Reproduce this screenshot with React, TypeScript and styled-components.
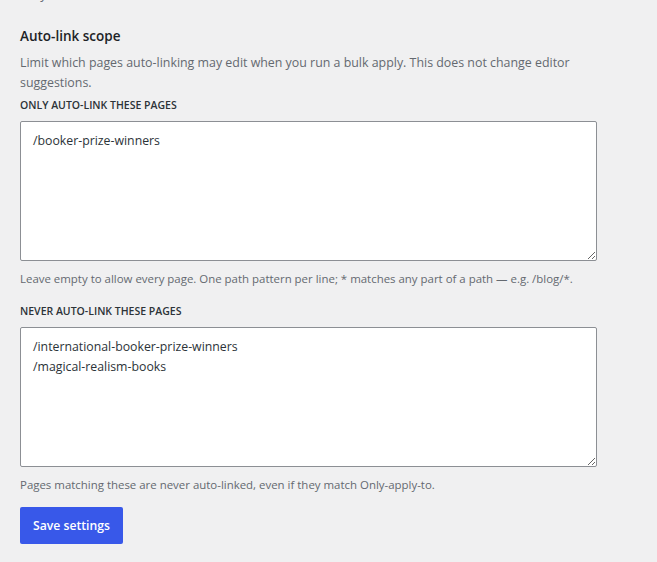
import React from "react";
import styled, { createGlobalStyle } from "styled-components";

const Global = createGlobalStyle`
  html, body { margin: 0; padding: 0; background: #f0f0f1; }
  body { font-family: "Open Sans", "Noto Sans", sans-serif; color: #3c434a; }
  * { box-sizing: border-box; }
`;

const Page = styled.div`
  width: 657px;
  height: 562px;
  overflow: hidden;
  padding: 0 20px;
  display: flex;
  flex-direction: column;
`;

const CutLine = styled.p`
  margin: -15px 0 0;
  font-size: 12.4px;
  line-height: 20px;
  color: #646970;
`;

const Heading = styled.h2`
  margin: 21px 0 0;
  font-size: 13.5px;
  line-height: 20px;
  font-weight: 600;
  color: #1d2327;
`;

const Description = styled.p`
  margin: 7px 0 0;
  max-width: 577px;
  font-size: 12.4px;
  line-height: 20px;
  color: #646970;
`;

const Label = styled.label<{ $gap: number }>`
  display: block;
  margin-top: ${(p) => p.$gap}px;
  font-size: 10.5px;
  line-height: 16px;
  font-weight: 600;
  text-transform: uppercase;
  color: #2c3338;
`;

const Area = styled.textarea`
  display: block;
  margin-top: 8px;
  width: 577px;
  height: 140px;
  padding: 9px 12px;
  border: 1px solid #8c8f94;
  border-radius: 2px;
  background: #fff;
  font-family: inherit;
  font-size: 12.3px;
  line-height: 20px;
  color: #2c3338;
  resize: vertical;
  outline: none;
`;

const Help = styled.p`
  margin: 10px 0 0;
  font-size: 11.45px;
  line-height: 16px;
  color: #646970;
`;

const Button = styled.button`
  align-self: flex-start;
  margin-top: 14px;
  height: 37px;
  padding: 0 13px;
  border: none;
  border-radius: 2px;
  background: #3858e9;
  color: #fff;
  font-family: inherit;
  font-size: 12.2px;
  font-weight: 600;
  cursor: pointer;
`;

export default function App() {
  return (
    <>
      <Global />
      <Page>
        <CutLine>Only</CutLine>
        <Heading>Auto-link scope</Heading>
        <Description>
          Limit which pages auto-linking may edit when you run a bulk apply. This does not change editor
          suggestions.
        </Description>
        <Label $gap={4}>Only auto-link these pages</Label>
        <Area defaultValue={"/booker-prize-winners"} />
        <Help>
          Leave empty to allow every page. One path pattern per line; * matches any part of a path — e.g. /blog/*.
        </Help>
        <Label $gap={16}>Never auto-link these pages</Label>
        <Area defaultValue={"/international-booker-prize-winners\n/magical-realism-books"} />
        <Help>Pages matching these are never auto-linked, even if they match Only-apply-to.</Help>
        <Button>Save settings</Button>
      </Page>
    </>
  );
}
